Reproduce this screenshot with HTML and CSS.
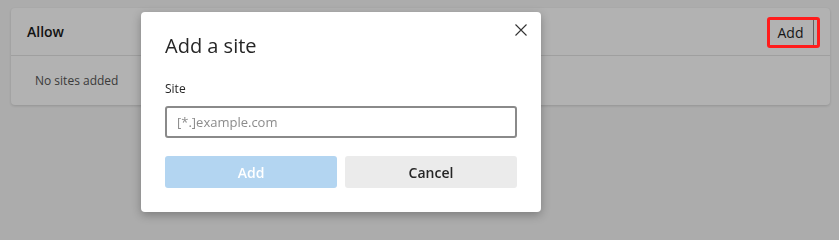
FILE: index.html
```html
<!DOCTYPE html>
<html lang="en">
<head>
<meta charset="utf-8">
<title>Add a site</title>
<link rel="stylesheet" href="styles.css">
</head>
<body>
  <main class="page">
    <section class="card">
      <header class="card-head">
        <h2 class="card-title">Allow</h2>
        <button class="add-btn" type="button">Add<span class="highlight"></span></button>
      </header>
      <div class="card-body">No sites added</div>
    </section>
  </main>
  <div class="overlay"></div>
  <div class="dialog" role="dialog" aria-labelledby="dlg-title">
    <button class="close" type="button" aria-label="Close">
      <svg width="12" height="12" viewBox="0 0 12 12"><path d="M0.5 0.5 L11.5 11.5 M11.5 0.5 L0.5 11.5" stroke="#333" stroke-width="1.1" fill="none"/></svg>
    </button>
    <h1 class="dialog-title" id="dlg-title">Add a site</h1>
    <label class="field-label" for="site">Site</label>
    <input class="field" id="site" type="text" placeholder="[*.]example.com">
    <div class="actions">
      <button class="btn btn-primary" type="button">Add</button>
      <button class="btn btn-secondary" type="button">Cancel</button>
    </div>
  </div>
</body>
</html>
```
FILE: styles.css
```css
* { box-sizing: border-box; }
html, body { margin: 0; height: 100%; }
body {
  background: #f7f7f7;
  font-family: "Open Sans", "Noto Sans", sans-serif;
  color: #1a1a1a;
  overflow: hidden;
}
.page {
  padding: 8px 9px 0 11px;
}
.card {
  background: #fff;
  border-radius: 4px;
  box-shadow: 0 1px 3px rgba(0,0,0,0.15);
}
.card-head {
  height: 48px;
  display: flex;
  align-items: center;
  justify-content: space-between;
  padding: 0 10px 0 16px;
  border-bottom: 1px solid #e4e4e4;
}
.card-title {
  margin: 0;
  font-size: 14px;
  font-weight: 600;
  color: #1a1a1a;
}
.add-btn {
  position: relative;
  width: 53px;
  height: 31px;
  margin-top: 1px;
  border: none;
  background: transparent;
  font-family: inherit;
  font-size: 14px;
  color: #1f1f1f;
  padding: 0 6px 0 0;
  text-align: center;
}
.add-btn::before {
  content: "";
  position: absolute;
  right: 6px;
  top: 3px;
  bottom: 3px;
  border-right: 1px solid #8c8c8c;
}
.highlight {
  position: absolute;
  inset: 0;
  border: 3px solid #ff1c1c;
  border-radius: 3px;
  z-index: 20;
}
.card-body {
  height: 49px;
  display: flex;
  align-items: center;
  padding-left: 24px;
  font-size: 12px;
  color: #555;
}
.overlay {
  position: fixed;
  inset: 0;
  background: rgba(0,0,0,0.3);
  z-index: 10;
}
.dialog {
  position: absolute;
  left: 141px;
  top: 12px;
  width: 400px;
  height: 200px;
  background: #fff;
  border-radius: 4px;
  box-shadow: 0 3px 10px rgba(0,0,0,0.28);
  z-index: 30;
  padding: 20px 24px 0 24px;
  display: flex;
  flex-direction: column;
}
.close {
  position: absolute;
  top: 8px;
  right: 10px;
  width: 20px;
  height: 20px;
  padding: 0;
  border: none;
  background: transparent;
  display: flex;
  align-items: center;
  justify-content: center;
}
.dialog-title {
  margin: 0;
  font-size: 20px;
  line-height: 28px;
  font-weight: 400;
  color: #262626;
}
.field-label {
  margin-top: 19px;
  font-size: 12px;
  line-height: 20px;
  color: #262626;
}
.field {
  margin-top: 7px;
  height: 32px;
  width: 352px;
  border: 2px solid #8a8a8a;
  border-radius: 3px;
  padding: 0 10px;
  font-family: inherit;
  font-size: 13px;
  color: #1a1a1a;
  outline: none;
}
.field::placeholder { color: #8c8c8c; }
.actions {
  margin-top: 18px;
  display: grid;
  grid-template-columns: 1fr 1fr;
  gap: 8px;
}
.btn {
  height: 32px;
  border: none;
  border-radius: 3px;
  font-family: inherit;
  font-size: 14px;
  font-weight: 600;
}
.btn-primary {
  background: #b3d5f1;
  color: #fff;
}
.btn-secondary {
  background: #ebebeb;
  color: #262626;
}
```
